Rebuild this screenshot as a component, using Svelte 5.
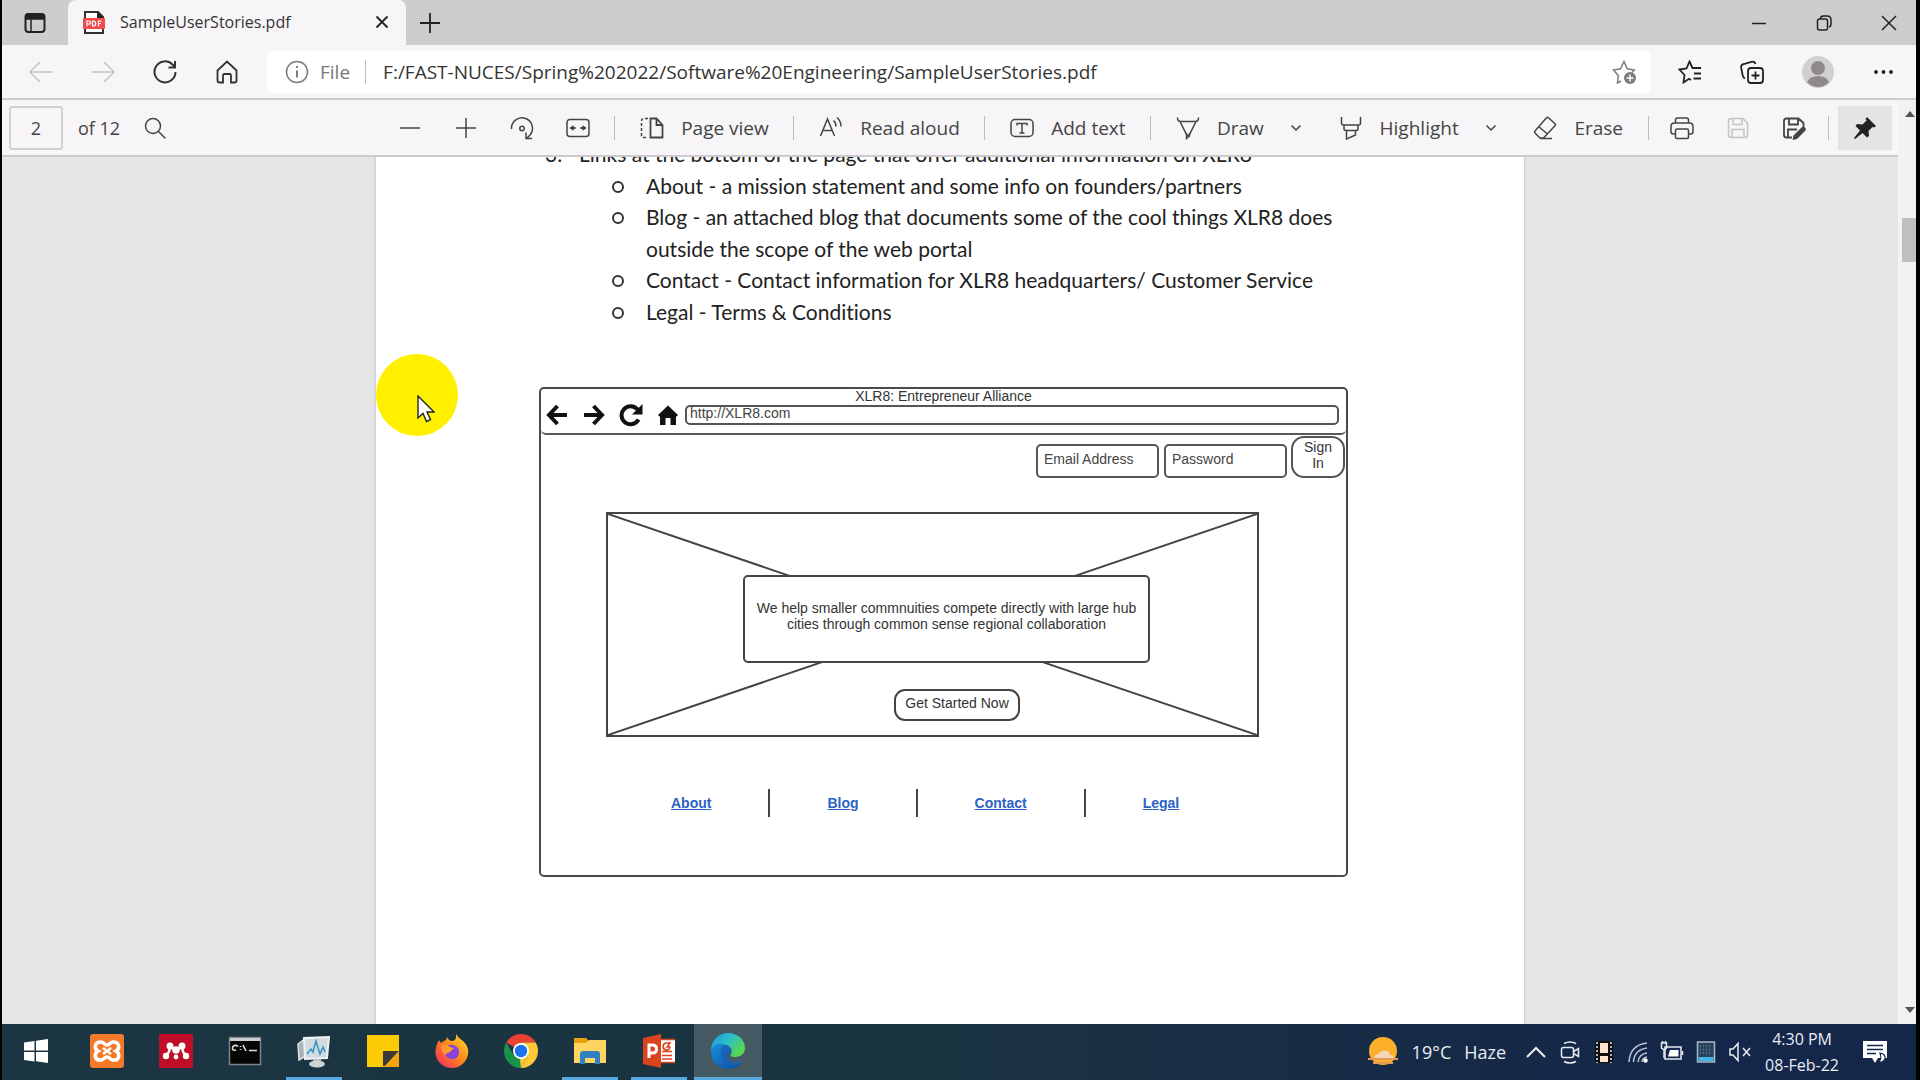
<script>
  const offers = [
    'About - a mission statement and some info on founders/partners',
    'Blog - an attached blog that documents some of the cool things XLR8 does outside the scope of the web portal',
    'Contact - Contact information for XLR8 headquarters/ Customer Service',
    'Legal - Terms & Conditions'
  ];
  let pageNumber = $state('2');
  let address = $state('F:/FAST-NUCES/Spring%202022/Software%20Engineering/SampleUserStories.pdf');
</script>

{#snippet chevron()}
  <svg class="i12" viewBox="0 0 12 12"><path d="M1.500 3.500l4.500 4.500 4.500-4.500" /></svg>
{/snippet}

<div class="screen">
  <header class="tabs">
    <button class="tab-actions" aria-label="Tab actions">
      <svg class="i24" viewBox="0 0 24 24"><rect x="2.500" y="3" width="19" height="18" rx="3" stroke-width="2" /><path d="M3 5.500q0-2.500 3-2.500h12q3 0 3 2.500v2.500H3z" fill="currentColor" /><path d="M8 8v13" /></svg>
    </button>
    <div class="tab">
      <svg class="i24" viewBox="0 0 24 24"><path d="M3 2h13l5 5v16H3z" fill="#fff" stroke="#333" stroke-width="2" /><path d="M15 1l7 7h-7z" fill="#222" stroke="none" /><rect x="1" y="8" width="22" height="11" rx="1" fill="#f04a4c" stroke="none" /><path d="M5 16.500v-5.500h2q1.500 0 1.500 1.600t-1.500 1.600H5M10.500 11v5h1q2.200 0 2.200-2.500t-2.200-2.500zM16.500 16.500v-5.500h3M16.500 13.500h2.500" stroke="#fff" stroke-width="1.200" /></svg>
      <span class="tab-title">SampleUserStories.pdf</span>
      <button aria-label="Close tab"><svg class="i16" viewBox="0 0 16 16"><path d="M2.500 2.500l11 11M13.500 2.500l-11 11" stroke-width="1.800" /></svg></button>
    </div>
    <button class="new-tab" aria-label="New tab"><svg class="i24" viewBox="0 0 24 24"><path d="M12 2v20M2 12h20" stroke-width="1.800" /></svg></button>
    <div class="window-controls">
      <button aria-label="Minimize"><svg class="i16" viewBox="0 0 16 16"><path d="M1 8.500h14" /></svg></button>
      <button aria-label="Restore"><svg class="i16" viewBox="0 0 16 16"><rect x="1.500" y="4" width="10" height="11" rx="2" /><path d="M4.500 3.500q0-2.500 3-2.500h3.500q4 0 4 4v4q0 2.500-2 3" /></svg></button>
      <button aria-label="Close"><svg class="i16" viewBox="0 0 16 16"><path d="M1 1l14 14M15 1L1 15" /></svg></button>
    </div>
  </header>

  <nav class="navbar">
    <button class="faded" aria-label="Back"><svg class="i24" viewBox="0 0 24 24"><path d="M23.500 12H1.500M11 2L1 12l10 10" /></svg></button>
    <button class="faded" aria-label="Forward"><svg class="i24" viewBox="0 0 24 24"><path d="M1 12h21.500M13 2l10 10-10 10" /></svg></button>
    <button aria-label="Refresh"><svg class="i24" viewBox="0 0 24 24"><path d="M22.500 12a10.500 10.500 0 1 1-3-7.500L22 7M22 1v6.500h-6.500" stroke-width="2" /></svg></button>
    <button aria-label="Home"><svg class="i24" viewBox="0 0 24 24"><path d="M2.500 10.500L12 1.500l9.500 9v10q0 2-2 2h-3.500v-7q0-1.500-1.500-1.500h-5q-1.500 0-1.500 1.500v7h-3.500q-2 0-2-2z" stroke-width="1.800" /></svg></button>
    <div class="address">
      <svg class="i24 muted" viewBox="0 0 24 24"><circle cx="12" cy="12" r="10.500" /><path d="M12 10.500v7M12 6v2" stroke-width="2" /></svg>
      <label for="url">File</label>
      <span class="rule"></span>
      <input id="url" type="text" bind:value={address} spellcheck="false" />
      <button class="muted" aria-label="Add to favorites"><svg class="i24" viewBox="0 0 24 24"><path d="M9 21l-3.500 2 .8-7.500L1.500 10l7-1.200L12 1.500l3.200 7.300 7 1.200-2.200 2.500" /><circle cx="18" cy="18" r="6" fill="currentColor" stroke="none" /><path d="M18 14.500v7M14.500 18h7" stroke="#fff" stroke-width="1.500" /></svg></button>
    </div>
    <div class="profile-tools">
      <button aria-label="Favorites"><svg class="i24" viewBox="0 0 24 24"><path d="M13 20l-2-1.200L5.500 22.500l1-7.500L1.500 9.500l7-1L11.500 1.500l3 6.500H23M16 13.500h7M15.500 18.500h7.500" stroke-width="1.800" /></svg></button>
      <button aria-label="Collections"><svg class="i24" viewBox="0 0 24 24"><rect x="8" y="8" width="15" height="15" rx="3" stroke-width="1.800" /><path d="M15.500 11.500v8M11.500 15.500h8M5 18.500q-1.800-.8-2.300-3L1.200 8q-.5-3 2.300-3.800l8-2.400q3-.8 4 2.200" stroke-width="1.800" /></svg></button>
      <button aria-label="Profile"><svg class="i32" viewBox="0 0 32 32"><circle cx="16" cy="16" r="16" fill="#d2d0d0" stroke="none" /><circle cx="16" cy="12" r="7" fill="#8e8a89" stroke="none" /><path d="M5 26q3-6 11-6t11 6q-4 5-11 5T5 26z" fill="#8e8a89" stroke="none" /></svg></button>
      <button aria-label="Settings and more"><svg class="i24" viewBox="0 0 24 24"><g fill="currentColor" stroke="none"><circle cx="4" cy="12" r="1.900" /><circle cx="11.500" cy="12" r="1.900" /><circle cx="19" cy="12" r="1.900" /></g></svg></button>
    </div>
  </nav>

  <div class="viewer">
    <div class="viewer-main">
      <div class="toolbar" role="toolbar" aria-label="PDF tools">
        <div class="page-tools">
          <input id="page" class="page-input" type="text" bind:value={pageNumber} />
          <label for="page">of 12</label>
          <button aria-label="Find"><svg class="i24" viewBox="0 0 24 24"><circle cx="10" cy="10" r="7.500" /><path d="M15.500 15.500l7 7" /></svg></button>
        </div>
        <div class="zoom-tools">
          <button aria-label="Zoom out"><svg class="i24" viewBox="0 0 24 24"><path d="M2 12h20" /></svg></button>
          <button aria-label="Zoom in"><svg class="i24" viewBox="0 0 24 24"><path d="M2 12h20M12 2v20" /></svg></button>
          <button aria-label="Rotate"><svg class="i24" viewBox="0 0 24 24"><path d="M1.500 13a10.500 10.500 0 1 1 19 5.500l-3.500 3.500M16 16.500v6h6" /><circle cx="12" cy="12.500" r="2.200" /></svg></button>
          <button aria-label="Fit to width"><svg class="i24" viewBox="0 0 24 24"><rect x="1" y="3.500" width="22" height="17" rx="3" /><path d="M4.500 12h5M19.500 12h-5" stroke-width="2" /><path d="M3.500 12l4-3v6zM20.500 12l-4-3v6z" fill="currentColor" stroke="none" /></svg></button>
        </div>
        <span class="rule"></span>
        <button><svg class="i24" viewBox="0 0 24 24"><path d="M10.500 2.500h6l6 6.500v12.500h-12zM16.500 2.500V9h6" stroke-width="1.800" /><path d="M8 2.500H4q-2.500 0-2.500 2.500v14q0 2.500 2.500 2.500h4" stroke-dasharray="3 2" /></svg>Page view</button>
        <span class="rule"></span>
        <button><svg class="i24" viewBox="0 0 24 24"><path d="M1.500 20L8.500 3l7 17M4 14.500h9M14.500 4.500q2.500 2 2.500 6M18 1.500q4 3.500 4 9" /></svg>Read aloud</button>
        <span class="rule"></span>
        <button><svg class="i24" viewBox="0 0 24 24"><rect x="1" y="3.500" width="22" height="17" rx="4" /><path d="M7 9.500V7.500h10v2M12 7.500v9.500M9.500 17h5" /></svg>Add text</button>
        <span class="rule"></span>
        <div class="pens">
          <button><svg class="i24" viewBox="0 0 24 24"><path d="M1.500 1.500q0 4 3 4h15q3 0 3-4M4 5.500l6.500 13q1.500 2 3 0l6.500-13M10.500 17v5.500l3-2.500v-3" /></svg>Draw</button>
          <button aria-label="Draw options">{@render chevron()}</button>
        </div>
        <div class="pens">
          <button><svg class="i24" viewBox="0 0 24 24"><path d="M2.500 1v6q0 2 2 2h15q2 0 2-2V1M5 9v4q0 1.500 2 1.500h10q2 0 2-1.500V9M7.500 14.500v8.500l9-4v-4.500" /></svg>Highlight</button>
          <button aria-label="Highlight options">{@render chevron()}</button>
        </div>
        <button><svg class="i24" viewBox="0 0 24 24"><path d="M13.500 1.800q1-1 2 0l6.500 6q1 1 0 2L10.500 22H7l-5-5q-1-1 0-2zM5.500 10.500l9 7.500M7 22.500h12" /></svg>Erase</button>
        <span class="rule"></span>
        <div class="file-tools">
          <button aria-label="Print"><svg class="i24" viewBox="0 0 24 24"><path d="M5.500 18H3.500Q1 18 1 15.500v-5Q1 7 4.500 7h15Q23 7 23 10.500v5q0 2.500-2.500 2.500h-2M5.500 7V4q0-2 2-2h9q2 0 2 2v3" /><rect x="5.500" y="13" width="13" height="9.500" rx="1.500" /></svg></button>
          <button class="faded" aria-label="Save"><svg class="i24" viewBox="0 0 24 24"><path d="M2.500 5q0-2.500 2.500-2.500h12l4.500 4.500v12q0 2.500-2.500 2.500H5q-2.500 0-2.500-2.500zM7 2.500v6h9v-6M6 21.500v-8h12v8" /></svg></button>
          <button aria-label="Save as"><svg class="i24" viewBox="0 0 24 24"><path d="M10 21.500H4.500Q2 21.500 2 19V5q0-2.500 2.500-2.500h12L21.500 7v4M7 2.500v6h9v-6M6 21.500v-8h9" stroke-width="1.800" /><path d="M11.500 19.500l8-8q2-1.500 3.500 0t0 3.500l-8 8-4.500 1z" fill="currentColor" stroke="none" /></svg></button>
        </div>
        <span class="rule tight"></span>
        <button class="pin" aria-label="Unpin toolbar"><svg class="i24" viewBox="0 0 24 24"><path d="M14 1l9 9-2 1.500-1.500-.5-4 4 .5 5-2 1.500-4.500-4.500L2 23l-1-1 6-7.500L2.500 10 4 8l5.500.5 4-4L12.500 3z" fill="currentColor" stroke="none" /></svg></button>
      </div>

      <main class="canvas">
        <article class="sheet">
          <ol start="3">
            <li>
              <span class="number">3.</span>Links at the bottom of the page that offer additional information on XLR8
              <ul>
                {#each offers as offer}<li>{offer}</li>{/each}
              </ul>
            </li>
          </ol>

          <section class="mock">
            <div class="mock-bar">
              <div class="mock-title">XLR8: Entrepreneur Alliance</div>
              <div class="mock-nav">
                <svg class="i24" viewBox="0 0 24 24"><path d="M22 12H4M12.500 3L4 12l8.500 9" stroke-width="4" /></svg>
                <svg class="i24" viewBox="0 0 24 24"><path d="M2 12h18M11.500 3l8.500 9-8.500 9" stroke-width="4" /></svg>
                <svg class="i24" viewBox="0 0 24 24"><path d="M19.500 16.500a9 9 0 1 1-1-10" stroke-width="4" /><path d="M23.500 1v10.500H13z" fill="currentColor" stroke="none" /></svg>
                <svg class="i24" viewBox="0 0 24 24"><path d="M12 2.500l10 9.500-1.500 1.500H20V22h-5.500v-7h-5v7H4v-8.500h-.5L2 12z" fill="currentColor" stroke="none" /></svg>
                <input type="text" value="http://XLR8.com" aria-label="Site address" />
              </div>
            </div>
            <form class="login" onsubmit={(e) => e.preventDefault()}>
              <input type="text" placeholder="Email Address" aria-label="Email Address" />
              <input type="password" placeholder="Password" aria-label="Password" />
              <button>Sign In</button>
            </form>
            <div class="hero">
              <svg class="cross" viewBox="0 0 100 100" preserveAspectRatio="none"><path d="M0 0L100 100M100 0L0 100" vector-effect="non-scaling-stroke" /></svg>
              <p>We help smaller commnuities compete directly with large hub cities through common sense regional collaboration</p>
              <button>Get Started Now</button>
            </div>
            <footer class="links">
              <a href="#about">About</a><a href="#blog">Blog</a><a href="#contact">Contact</a><a href="#legal">Legal</a>
            </footer>
          </section>

          <div class="pointer">
            <svg viewBox="0 0 18 28"><path d="M1 1v22l5-4.500 3.500 8 4-1.800-3.500-7.700h7z" fill="#fff" stroke="#222" stroke-width="1.400" /></svg>
          </div>
        </article>
      </main>
    </div>
    <div class="scrollbar">
      <svg class="i12" viewBox="0 0 12 12"><path d="M1 9l5-6 5 6z" fill="currentColor" stroke="none" /></svg>
      <span class="thumb"></span>
      <svg class="i12" viewBox="0 0 12 12"><path d="M1 3l5 6 5-6z" fill="currentColor" stroke="none" /></svg>
    </div>
  </div>

  <footer class="taskbar">
    <button class="start" aria-label="Start"><svg class="i24" viewBox="0 0 24 24"><path d="M0 3.500l10.500-1.500v9.500H0zM12 1.800L24 0v11.500H12zM0 13h10.500v9.500L0 21zM12 13h12v11l-12-1.800z" fill="#fff" stroke="none" /></svg></button>
    <button aria-label="XAMPP"><svg class="i36" viewBox="0 0 36 36"><rect x="1" y="1" width="34" height="34" rx="3" fill="#f47a2a" stroke="none" /><path d="M12 9c-7 0-7 7-3 9-4 2-4 10 3 9 3 0 3-3 6-3s3 3 6 3c7 1 7-7 3-9 4-2 4-9-3-9-3 0-3 3-6 3s-3-3-6-3z" fill="none" stroke="#fff" stroke-width="3.500" /><path d="M14 15l8 6M22 15l-8 6" stroke="#fff" stroke-width="2.500" /></svg></button>
    <button aria-label="Mendeley"><svg class="i36" viewBox="0 0 36 36"><rect x="1" y="1" width="34" height="34" rx="1" fill="#c00d28" stroke="none" /><g fill="#fff" stroke="none"><circle cx="12" cy="13" r="3.500" /><circle cx="24" cy="13" r="3.500" /><circle cx="18" cy="17" r="3.800" /><circle cx="8" cy="23" r="3.200" /><circle cx="18" cy="24" r="2.400" /><circle cx="28" cy="23" r="3.200" /></g><path d="M8 22q3-1 4-8l6 3 6-3q1 7 4 8" stroke="#fff" stroke-width="2.500" /></svg></button>
    <button aria-label="Command Prompt"><svg class="i36" viewBox="0 0 36 36"><rect x="2.500" y="4.500" width="31" height="27" fill="#050505" stroke="#7d8588" /><path d="M3 6.500h30" stroke="#c9cdcf" stroke-width="3" /><path d="M11 13.500q-1.500-1.500-3.500-1t-2 3 3.500 1.500M13.500 13v1M13.500 16v1M16 12l3 6M22 17.500h8" stroke="#ddd" stroke-width="1.600" /></svg></button>
    <button class="running" aria-label="Performance monitor"><svg class="i36" viewBox="0 0 36 36"><path d="M2 11l8-6v18l-7 4z" fill="#a9b3b5" stroke="#dde3e4" /><path d="M8 5l25-1-2 21-22 1z" fill="#cfdbe0" stroke="#eef2f3" stroke-width="2" /><path d="M11 21l4-5 2 3 3-11 4 13 3-7 2 5" stroke="#3d95c4" stroke-width="1.600" /><path d="M17 26h8v4h-8z" fill="#b6bfc2" stroke="none" /><ellipse cx="21" cy="31" rx="8" ry="3.500" fill="#cdd3d5" stroke="none" /></svg></button>
    <button aria-label="Sticky Notes"><svg class="i36" viewBox="0 0 36 36"><path d="M2 2h32v32H2z" fill="#fccb05" stroke="none" /><path d="M18 18h16L20 33h-2z" fill="#3b3a39" stroke="none" /><path d="M34 18v16H19z" fill="#f5a30d" stroke="none" /></svg></button>
    <button aria-label="Firefox"><svg class="i36" viewBox="0 0 36 36"><defs><linearGradient id="fox" x1="1" y1="0" x2="0" y2="1"><stop offset="0" stop-color="#ffe83a" /><stop offset=".45" stop-color="#ff8a16" /><stop offset="1" stop-color="#f2216b" /></linearGradient></defs><path d="M22 1q3 5 7 7c4 4 6 8 5 13-1 8-8 14-16 14S2 29 1.500 20C1 15 3 11 5 7l2 3q2-2 5-3l1-3q2 4 5 4 5 0 4-7z" fill="url(#fox)" stroke="none" /><path d="M11 15q3-4 8-3 7 2 6 8-1 6-7 6-5 0-7-5l5-2q-3-1-5-4z" fill="#8546d8" stroke="none" /><path d="M7 13q5-3 9 1l4 1-4 4q-4 1-5 3-4-4-4-9z" fill="#ff9b2a" stroke="none" /></svg></button>
    <button aria-label="Chrome"><svg class="i36" viewBox="0 0 36 36"><g stroke="none"><path d="M18 18L3.300 9.500A17 17 0 0 1 32.700 9.500H18z" fill="#e94234" /><path d="M18 18V9.500h14.700A17 17 0 0 1 18 35l7-13z" fill="#fcc934" /><path d="M18 18v8.500L18 35A17 17 0 0 1 3.300 9.500L10.500 22z" fill="#17944a" /><path d="M25 22L18 35l-1-9z" fill="#fcc934" /><circle cx="18" cy="18" r="8" fill="#fff" /><circle cx="18" cy="18" r="6.200" fill="#1a73e8" /></g></svg></button>
    <button class="running" aria-label="File Explorer"><svg class="i36" viewBox="0 0 36 36"><g stroke="none"><path d="M2 5h12l3 3h16v22H2z" fill="#e8a30c" /><path d="M2 10h12l3-3h17v23H2z" fill="#ffd561" /><path d="M8 31V21q0-3 3-3h14q3 0 3 3v10h-5v-6H13v6z" fill="#2f82c3" /><path d="M13 25h10v5H13z" fill="#ffd561" /></g></svg></button>
    <button class="running" aria-label="PowerPoint"><svg class="i36" viewBox="0 0 36 36"><g stroke="none"><path d="M18 6h16v24H18z" fill="#fff" /><path d="M2 5l18-4v34L2 31z" fill="#d9431e" /></g><path d="M34 6.500H20M34 29.500H20M21 18.500h10M21 22.500h10M21 26h10M29 10h-4a3.500 3.500 0 1 0 4 4h-3z" stroke="#d9431e" stroke-width="1.600" /><path d="M8 25V12h3.500q4 0 4 4t-4 4H8" stroke="#fff" stroke-width="3" /></svg></button>
    <button class="running active" aria-label="Edge"><svg class="i36" viewBox="0 0 36 36"><defs><linearGradient id="ea" x1="0" y1="0" x2="1" y2=".6"><stop offset="0" stop-color="#1b93dd" /><stop offset=".5" stop-color="#2bc0c9" /><stop offset="1" stop-color="#59d84c" /></linearGradient><linearGradient id="eb" x1="0" y1="0" x2="1" y2="1"><stop offset="0" stop-color="#1a8fe0" /><stop offset="1" stop-color="#0b4c9c" /></linearGradient></defs><g stroke="none"><path d="M1 18C1 8 8 0 18 0s17 7 17 15c0 6-5 9-10 9-4 0-5-1-4-3 2-3 0-8-5-9-7-1-13 2-15 6z" fill="url(#ea)" /><path d="M1 18c1-6 7-8 12-7 5 0 8 4 8 8-1-1-6 1-5 6 1 6 9 8 16 4-3 5-9 7-14 7C8 36 1 28 1 18z" fill="url(#eb)" /><path d="M11 17c0-4 5-6 8-3 2 2 2 4 1 6-3 2-2 6 2 8 3 1 7 1 11-2-3 8-10 9-15 6-5-2-8-9-7-15z" fill="#1560b8" opacity=".7" /></g></svg></button>

    <div class="tray">
      <button class="weather"><svg class="i32" viewBox="0 0 32 32"><circle cx="16" cy="15" r="14" fill="#fbaf2a" stroke="none" /><path d="M8 23q-2-5 4-5 2-5 7-3 4 0 4 4 4 0 4 4z" fill="#f5d7b8" stroke="none" /><path d="M1 23h30M6 27h20" stroke="#e39a58" stroke-width="2" /></svg><span>19°C</span><span>Haze</span></button>
      <button aria-label="Show hidden icons"><svg class="i24" viewBox="0 0 24 24"><path d="M3 17l9-9 9 9" stroke-width="2" /></svg></button>
      <button aria-label="Meet now"><svg class="i24" viewBox="0 0 24 24"><rect x="3.500" y="7.500" width="12" height="10" rx="2" /><path d="M15.500 11.500l5-3v8l-5-3M6 3.500q6-3 12 0M6 21.500q6 3 12 0" /></svg></button>
      <button aria-label="Media"><svg class="i24" viewBox="0 0 24 24"><path d="M3 1h18v22H3z" fill="#111" stroke="none" /><path d="M8 3h8v10H8zM8 16h8v6H8z" fill="#ffe3cc" stroke="none" /><path d="M5 2v21M19 2v21" stroke-dasharray="2 2" /></svg></button>
      <button aria-label="Network"><svg class="i24" viewBox="0 0 24 24"><path d="M3 22Q4 5 21 3M7.500 22Q8 10 21 8M12 22q1-8 9-9M16 22q0-4 5-5" stroke="#b8c4d2" /><circle cx="19.500" cy="20.500" r="2.200" fill="#fff" stroke="none" /></svg></button>
      <button aria-label="Battery"><svg class="i24" viewBox="0 0 24 24"><rect x="5" y="7" width="16" height="12" /><path d="M22.500 11v4M4 10v8M1.500 3v5q2.500 3 5 0V3zM2.500 3V1M5.500 3V1" /><path d="M10 10h8.500v6.500H8z" fill="#fff" stroke="none" /></svg></button>
      <button aria-label="Touch keyboard"><svg class="i24" viewBox="0 0 24 24"><rect x="3.500" y="2" width="17" height="20" fill="#28435c" stroke="#a9bac6" /><path d="M4.500 17h15v4h-15z" fill="#48b4ec" stroke="none" /><path d="M6 6h12M6 9.500h12M6 13h12" stroke="#668096" stroke-dasharray="1 2" /></svg></button>
      <button aria-label="Volume muted"><svg class="i24" viewBox="0 0 24 24"><path d="M2 9h3l5-5.500v17L5 15H2zM15 8l7 8M22 8l-7 8" /></svg></button>
      <button class="clock"><span>4:30 PM</span><span>08-Feb-22</span></button>
      <button aria-label="Notifications"><svg class="i24" viewBox="0 0 24 24"><path d="M0 1h24v17h-9l-3 5-3-5H0z" fill="#fff" stroke="none" /><path d="M4 5.500h16M4 9.500h16M4 13.500h9" stroke="#17294a" /><path d="M17 13q6 1 5 6-2 4-6 3 3-4 1-9z" fill="#fff" stroke="#17294a" stroke-width="1.200" /></svg></button>
    </div>
  </footer>
</div>

<style>
  :global(body) { margin: 0; background: #000; }
  *, ::before { box-sizing: border-box; }
  .screen { display: flex; flex-direction: column; height: 100vh; padding: 0 4px 0 2px; background: #000; color: #333; font: 19px/24px "Open Sans", "Noto Sans", sans-serif; }
  button { display: flex; align-items: center; justify-content: center; flex: none; gap: 17px; margin: 0; padding: 0; border: 0; background: none; color: inherit; font: inherit; white-space: nowrap; }
  input { min-width: 0; margin: 0; border: 0; outline: 0; background: none; color: inherit; font: inherit; }
  svg { display: block; flex: none; fill: none; stroke: currentColor; stroke-width: 1.5; }
  .i12 { width: 12px; height: 12px; }
  .i16 { width: 16px; height: 16px; }
  .i24 { width: 24px; height: 24px; }
  .i32 { width: 32px; height: 32px; }
  .i36 { width: 36px; height: 36px; }
  .faded { color: #c4c3c5; }
  .muted { color: #7c7b7d; }
  .rule { flex: none; width: 1px; height: 24px; background: #bdbcbe; }

  .tabs { display: flex; flex: none; height: 45px; background: #cdcdcd; color: #222; }
  .tab-actions { width: 66px; }
  .tab { display: flex; align-items: center; gap: 14px; width: 338px; padding: 0 16px 1px 14px; border-radius: 8px 8px 0 0; background: #f7f5f8; }
  .tab-title { flex: 1; font-size: 16px; color: #333; }
  .new-tab { width: 48px; }
  .window-controls { display: flex; gap: 49px; margin-left: auto; padding-right: 19px; }

  .navbar { display: flex; flex: none; align-items: center; gap: 38px; height: 55px; padding: 0 20px 0 27px; border-bottom: 2px solid #cccbcd; background: #f7f5f8; }
  .address { display: flex; flex: 1; align-items: center; gap: 15px; height: 42px; margin: 0 -11px 0 -10px; padding: 0 15px 0 18px; border-radius: 5px; background: #fff; }
  .address label { margin-left: -4px; color: #777; }
  .address input { flex: 1; color: #333; }
  .profile-tools { display: flex; align-items: center; gap: 38px; color: #222; }

  .viewer { display: flex; flex: 1; min-height: 0; background: #e6e5e8; }
  .viewer-main { display: flex; flex: 1; flex-direction: column; min-width: 0; }
  .toolbar { display: flex; flex: none; align-items: center; justify-content: space-between; height: 57px; padding: 0 6px 0 7px; border-bottom: 2px solid #cbcacc; background: #f7f5f8; color: #444; }
  .page-tools { display: flex; align-items: center; gap: 15px; flex: 0 1 364px; font-size: 18px; }
  .page-tools button { margin-left: 8px; }
  .page-input { width: 54px; height: 44px; border: 2px solid #cfced1; border-radius: 3px; text-align: center; }
  .zoom-tools { display: flex; gap: 32px; }
  .pens { display: flex; gap: 26px; margin-right: 12px; }
  .file-tools { display: flex; gap: 32px; margin-left: -3px; }
  .tight { margin: 0 -16px 0 -3px; }
  .pin { width: 54px; height: 44px; background: #e5e3e6; color: #222; }

  .canvas { flex: 1; min-height: 0; overflow: hidden; }
  .sheet { position: relative; width: 1148px; max-width: 100%; min-height: 100%; margin: -19px auto 0; padding: 0 176px 165px 163px; background: #fff; box-shadow: 0 0 3px #b5b4b7; color: #222; }
  ol, ul { margin: 0; padding: 0; list-style: none; }
  ol { padding: 0 0 0 40px; font: 21px/1.5 Lato, sans-serif; font-variant-ligatures: none; }
  .number { display: inline-block; width: 34px; margin-left: -34px; }
  ul { margin-left: 67px; }
  ul li::before { content: ""; float: left; width: 12px; height: 12px; margin: 11px 0 0 -34px; border: 2px solid #333; border-radius: 50%; }

  .mock { margin-top: 60px; border: 2px solid #4a4a4a; border-radius: 5px; color: #333; font: 14px/16px "Liberation Sans", Arial, sans-serif; }
  .mock-bar { height: 46px; border-bottom: 2px solid #5a5a5a; border-radius: 0 0 5px 5px; text-align: center; }
  .mock-title { line-height: 14px; }
  .mock-nav { display: flex; align-items: center; gap: 13px; padding: 0 7px 0 4px; color: #111; }
  .mock-nav input { flex: 1; height: 20px; margin-left: -8px; padding: 0 3px 4px; border: 2px solid #555; border-radius: 5px; color: #444; }
  .login { display: flex; align-items: flex-end; justify-content: flex-end; gap: 5px; height: 43px; padding-right: 1px; }
  .login input { width: 123px; height: 34px; padding: 0 6px 4px; border: 2px solid #555; border-radius: 5px; }
  .login input::placeholder { color: #444; opacity: 1; }
  .login button { width: 54px; height: 42px; margin-left: -1px; padding: 0 10px 5px; border: 2px solid #555; border-radius: 13px; white-space: normal; }
  .hero { position: relative; display: flex; flex-direction: column; align-items: center; height: 225px; margin: 34px 87px 0 65px; padding-top: 61px; border: 2px solid #444; }
  .cross { position: absolute; inset: 0; width: 100%; height: 100%; stroke: #444; stroke-width: 2; }
  .hero p { position: relative; width: 407px; height: 88px; margin: 0 0 26px 28px; padding: 23px 10px; border: 2px solid #444; border-radius: 5px; background: #fff; text-align: center; }
  .hero button { position: relative; height: 32px; margin-left: 49px; padding: 0 9px 4px; border: 2px solid #444; border-radius: 11px; background: #fff; }
  .links { display: flex; padding: 52px 73px 58px; }
  .links a { padding: 5px 57px; border-left: 2px solid #444; color: #2b62c4; font-weight: bold; line-height: 18px; }
  .links a:first-child { border-left: 0; }

  .pointer { position: absolute; left: 0; top: 216px; width: 82px; height: 82px; padding: 41px; border-radius: 50%; background: #fff000; }
  .pointer svg { width: 18px; height: 28px; }

  .scrollbar { display: flex; flex-direction: column; align-items: flex-end; width: 18px; padding: 8px 0; background: #f2f1f3; color: #555; }
  .thumb { width: 14px; height: 44px; margin: 98px 0 auto; background: #bfbec0; }

  .taskbar { display: flex; flex: none; gap: 1px; height: 56px; background: linear-gradient(90deg, #1b3542, #1a3341 50%, #14264a 90%); color: #e8edf2; font-size: 18px; }
  .taskbar > button { width: 68px; padding-bottom: 3px; }
  .taskbar > .start { width: 70px; padding-right: 2px; }
  .taskbar > .running { background: linear-gradient(#5aaae2, #5aaae2) 50% 100% / 56px 3px no-repeat; }
  .taskbar > .active { background: linear-gradient(#5aaae2, #5aaae2) 50% 100% / 68px 3px no-repeat, #465a64; }
  .tray { display: flex; align-items: center; gap: 10px; margin-left: auto; padding-right: 29px; }
  .weather { gap: 13px; margin-right: 8px; }
  .clock { flex-direction: column; gap: 2px; margin: 0 14px 0 3px; font-size: 16px; }
</style>
